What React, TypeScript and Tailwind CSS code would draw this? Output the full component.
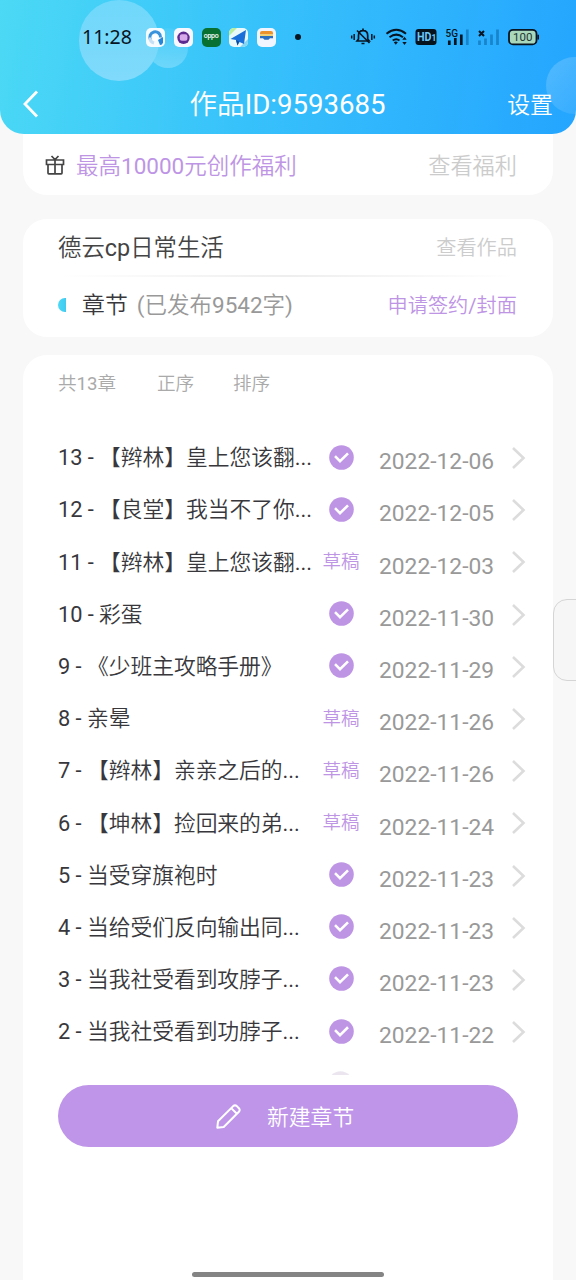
type Chapter = {
  no: number;
  title: string;
  date: string;
  draft?: boolean;
};

const chapters: Chapter[] = [
  { no: 13, title: "【辫林】皇上您该翻...", date: "2022-12-06" },
  { no: 12, title: "【良堂】我当不了你...", date: "2022-12-05" },
  { no: 11, title: "【辫林】皇上您该翻...", date: "2022-12-03", draft: true },
  { no: 10, title: "彩蛋", date: "2022-11-30" },
  { no: 9, title: "《少班主攻略手册》", date: "2022-11-29" },
  { no: 8, title: "亲晕", date: "2022-11-26", draft: true },
  { no: 7, title: "【辫林】亲亲之后的...", date: "2022-11-26", draft: true },
  { no: 6, title: "【坤林】捡回来的弟...", date: "2022-11-24", draft: true },
  { no: 5, title: "当受穿旗袍时", date: "2022-11-23" },
  { no: 4, title: "当给受们反向输出同...", date: "2022-11-23" },
  { no: 3, title: "当我社受看到攻脖子...", date: "2022-11-23" },
  { no: 2, title: "当我社受看到功脖子...", date: "2022-11-22" },
];

function CheckBadge() {
  return (
    <svg width="25" height="25" viewBox="0 0 25 25" fill="none">
      <circle cx="12.5" cy="12.5" r="12.3" fill="#be95e5" />
      <path d="M6 11.2L11 16.2L19 8.3" stroke="white" strokeWidth="2.6" />
    </svg>
  );
}

function AppIcons() {
  return (
    <div className="ml-[14px] flex items-center gap-[8.8px]">
      <svg width="19" height="19" viewBox="0 0 19 19">
        <rect width="19" height="19" rx="5" fill="#f5fbff" />
        <path d="M4.6 12A5.4 5.4 0 1 1 14.6 9.5" fill="none" stroke="#3b93dc" strokeWidth="3" />
        <path d="M4 9.5A5.4 5.4 0 0 0 8 15" fill="none" stroke="#c5dff5" strokeWidth="3" />
        <path d="M12 12L17 9V14.5Q16.5 17 14 17Z" fill="#2687d6" />
        <circle cx="9.3" cy="9.8" r="3" fill="white" />
      </svg>
      <svg width="19" height="19" viewBox="0 0 19 19">
        <rect width="19" height="19" rx="5" fill="#f8f6ff" />
        <circle cx="9.5" cy="9.8" r="6.2" fill="#5d2a91" />
        <rect x="5.8" y="6.2" width="7.6" height="6.6" rx="2" fill="#d8a9ea" />
      </svg>
      <div className="flex h-[19px] w-[19px] items-center justify-center rounded-[5px] bg-[#087031] font-['Roboto',sans-serif] text-[7px] leading-none font-medium tracking-[-0.3px] text-white">
        <span className="-mt-px">oppo</span>
      </div>
      <svg width="19" height="19" viewBox="0 0 19 19">
        <rect width="19" height="19" rx="5" fill="#e9f8fb" />
        <path d="M0 5a5 5 0 0 1 5-5h3L0 8z" fill="#b9eda0" />
        <path d="M19 11v3a5 5 0 0 1-5 5h-3z" fill="#84d6f3" />
        <path d="M17 2L1.5 11L7 12L8.5 17.5L10.5 14L15 16Z" fill="#1b6fd8" />
        <path d="M7 12L8.5 17.5L10 13.5Z" fill="#094b9d" />
      </svg>
      <svg width="19" height="19" viewBox="0 0 19 19">
        <rect width="19" height="19" rx="5" fill="#f0f5ff" />
        <path d="M3 5q0-2 2-2h9q2 0 2 2v1.5H3z" fill="#ee922c" />
        <path d="M3 6.3h13V8H3z" fill="#f3d36d" />
        <path d="M3 8h13v2.2h-3l-1.5 1.6h-4L6 10.2H3z" fill="#2e6fc0" />
      </svg>
    </div>
  );
}

function SystemIcons() {
  return (
    <svg className="ml-[49px]" width="189" height="20" viewBox="350 27 189 20" fill="none" stroke="#071523">
      {/* muted bell */}
      <path d="M351.7 35.5v3M354.2 34v6M374.3 35.5v3M371.8 34v6" strokeWidth="1.5" />
      <path d="M357 41l1.5-2v-3.5c0-3 1.8-4.8 4.6-4.8s4.6 1.8 4.6 4.8V39l1.5 2zM363 28.5v2M361.5 43.5h3" strokeWidth="1.7" />
      <path d="M357 30.5l12.5 12.5" strokeWidth="1.6" />
      {/* wifi */}
      <path d="M386.5 33.7q9.8-7.8 19.5 0M389.5 37.2q6.8-5.2 13.5 0M392.7 40.5q3.6-2.6 6.8 0" strokeWidth="2" />
      <path d="M393.8 42.2q2-1.5 4 0l-2 2.5z" fill="#071523" stroke="none" />
      <path d="M402.3 39.8l2.2-3 2.2 3zM402.3 42l2.2 3 2.2-3z" fill="#071523" stroke="none" />
      {/* HD1 */}
      <rect x="415.5" y="29" width="21" height="16" rx="3" fill="#05131f" stroke="none" />
      <text x="417" y="41.4" fill="#6cc8fa" stroke="none" fontFamily="Roboto, sans-serif" fontWeight="700" fontSize="12.5" textLength="14.5" lengthAdjust="spacingAndGlyphs">HD</text>
      <text x="431.4" y="41.3" fill="#6cc8fa" stroke="none" fontFamily="Roboto, sans-serif" fontWeight="700" fontSize="8.5">1</text>
      {/* 5G signal */}
      <text x="445.5" y="36.6" fill="#071523" stroke="none" fontFamily="Roboto, sans-serif" fontWeight="500" fontSize="10">5G</text>
      <path d="M449.3 45v-4.5M455.3 45v-7M461.3 45v-10.5" strokeWidth="2.7" />
      <path d="M467.3 45V29.5" strokeWidth="2.7" stroke="#1784cb" />
      {/* no service */}
      <path d="M479 31l5 5M484 31l-5 5" strokeWidth="2" />
      <path d="M479.5 45v-4.5M485.5 45v-6.5M491.5 45V34.5M497.5 45V29.5" strokeWidth="2.7" stroke="#1784cb" />
      {/* battery */}
      <rect x="509" y="29.8" width="27.5" height="14.6" rx="4" fill="#a9d8bd" strokeWidth="1.8" />
      <path d="M538.2 34.8v4.6" strokeWidth="1.6" />
      <text x="522.8" y="41.2" textAnchor="middle" fill="#21352f" stroke="none" fontFamily="Roboto, sans-serif" fontSize="11.5">100</text>
    </svg>
  );
}

function Header() {
  return (
    <header className="relative h-[134px] shrink-0 overflow-hidden rounded-b-[24px] bg-linear-[100deg,#4bd9f5_0%,#37c1fb_45%,#24a5ff_100%]">
      <div className="absolute top-[28px] left-[148px] h-10 w-10 rounded-full bg-linear-to-b from-white/5 to-white/25" />
      <div className="absolute top-0 left-[79px] h-[81px] w-[80px] rounded-full bg-linear-to-b from-[#6fd8fb] to-[#80dafb]" />
      <div className="absolute top-[57px] left-[546px] h-[57px] w-[57px] rounded-full bg-linear-to-br from-white/20 to-white/5" />
      <div className="relative flex h-[74px] items-center pl-[82px]">
        <span className="w-[50px] font-['Noto_Sans',sans-serif] text-[19.5px] leading-none whitespace-nowrap text-[#071523]">11:28</span>
        <AppIcons />
        <span className="ml-[19px] h-[6px] w-[6px] rounded-full bg-[#071523]" />
        <SystemIcons />
      </div>
      <div className="relative grid h-[60px] grid-cols-[1fr_auto_1fr] items-center pr-[23px] pl-[22px] text-white">
        <svg width="18" height="28" viewBox="0 0 18 28" fill="none" stroke="white" strokeWidth="2.8">
          <path d="M15 1.5L3 14L15 26.5" />
        </svg>
        <h1 className="pt-[2px] text-[27.6px] leading-none font-normal">作品ID:9593685</h1>
        <span className="pt-[5px] text-right text-[22.9px] leading-none">设置</span>
      </div>
    </header>
  );
}

function ChapterRow({ no, title, date, draft }: Chapter) {
  return (
    <li className="flex h-[52.2px] items-center pl-[35px]">
      <span className="w-[262px] shrink-0 text-[21.8px] leading-none tracking-[-0.05px] whitespace-nowrap text-[#38383c]">
        {no} - {title}
      </span>
      <span className="flex w-[42px] shrink-0 justify-center pb-[2px] text-[18.5px] leading-none whitespace-nowrap text-[#be95e5]">
        {draft ? <span className="pt-[2px]">草稿</span> : <CheckBadge />}
      </span>
      <span className="ml-[17px] w-[132px] shrink-0 pt-[9px] text-[22.8px] leading-none text-[#999]">{date}</span>
      <svg className="shrink-0" width="15" height="24" viewBox="0 0 15 24" fill="none" stroke="#dcdcdc" strokeWidth="2.6">
        <path d="M2 2L12.5 12L2 22" />
      </svg>
    </li>
  );
}

export default function App() {
  return (
    <div className="relative flex h-[1280px] w-[576px] flex-col overflow-hidden bg-[#f8f8f8] font-['Roboto','Noto_Sans_CJK_SC_DemiLight','Noto_Sans_CJK_SC',sans-serif]">
      <Header />
      <main className="flex flex-1 flex-col px-[23px]">
        <section className="flex h-[61px] items-center rounded-b-[24px] bg-white pr-[36px] pl-[22px] text-[22.5px] leading-none">
          <svg width="20" height="20" viewBox="0 0 20 20" fill="none" stroke="#444" strokeWidth="1.7">
            <path d="M1.5 5h17v4.5h-17zM3 9.5V18q0 .8.8.8h12.4q.8 0 .8-.8V9.5M10 5v13.5M6.5 1L10 4.6L13.5 1" />
          </svg>
          <span className="ml-[11px] pt-[3px] text-[#be95e5]">最高10000元创作福利</span>
          <span className="ml-auto pt-[3px] text-[22.2px] text-[#ccc]">查看福利</span>
        </section>

        <section className="mt-6 flex h-[118px] flex-col rounded-[24px] bg-white pr-[36px] pl-[35px] leading-none">
          <div className="flex h-[56px] items-center justify-between pt-[3px]">
            <h2 className="text-[23.4px] leading-none font-normal text-[#444]">德云cp日常生活</h2>
            <span className="text-[20.2px] text-[#ccc]">查看作品</span>
          </div>
          <div className="h-[1.5px] bg-linear-to-r from-transparent via-[#eee] to-transparent" />
          <div className="flex h-[56px] items-center">
            <span className="h-[14px] w-[8px] rounded-l-full bg-linear-to-r from-[#4bd9f5] to-[#42caf0]" />
            <span className="ml-[16px] pt-[3px] text-[22.9px] text-[#38383c]">章节</span>
            <span className="ml-[9px] pt-[2px] text-[22.5px] text-[#999]">(已发布9542字)</span>
            <span className="ml-auto pt-[3px] text-[20.2px] text-[#be95e5]">申请签约/封面</span>
          </div>
        </section>

        <section className="mt-[18px] flex flex-1 flex-col rounded-t-[24px] bg-white">
          <div className="flex h-[57px] items-center pt-[2px] pl-[35px] text-[18.6px] leading-none text-[#aaa]">
            <span className="w-[99px]">共13章</span>
            <span className="w-[76px]">正序</span>
            <span>排序</span>
          </div>
          <div className="relative mt-[20px] h-[643px] overflow-hidden">
            <ul>
              {chapters.map((chapter) => (
                <ChapterRow key={chapter.no} {...chapter} />
              ))}
            </ul>
            <div className="flex justify-center pt-[12.5px] pl-[105px] opacity-25 grayscale-50">
              <CheckBadge />
            </div>
          </div>
          <button className="mt-[10px] ml-[35px] flex h-[62px] w-[460px] items-center rounded-full bg-[#be95e8] pl-[158px] text-[21.8px] leading-none text-white">
            <svg width="25" height="25" viewBox="0 0 25 25" fill="none" stroke="white" strokeWidth="2" strokeLinejoin="round">
              <path d="M1.3 23.7L2 17.3L17.2 2.1Q19 .6 20.8 2.1L22.9 4.2Q24.4 6 22.9 7.8L7.7 23ZM15.2 4.1L20.9 9.8" />
            </svg>
            <span className="ml-[26px] pt-[3px]">新建章节</span>
          </button>
        </section>
      </main>
      <div className="absolute top-[599px] left-[553px] h-[82px] w-[40px] rounded-[14px] border border-[#d5d5d5] bg-[#f6f6f6]" />
      <div className="absolute top-[1272px] left-[192px] h-[5px] w-[192px] rounded-full bg-[#848484]" />
    </div>
  );
}
